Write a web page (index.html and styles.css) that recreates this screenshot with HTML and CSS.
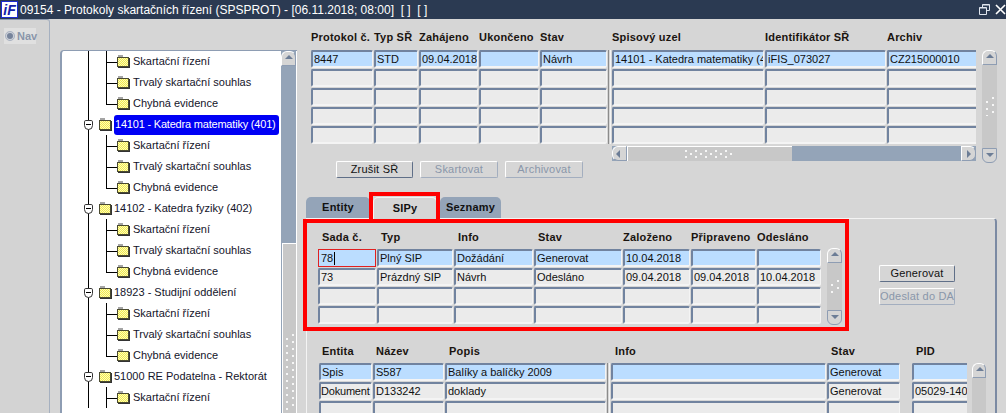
FILE: index.html
```html
<!DOCTYPE html>
<html lang="cs">
<head>
<meta charset="utf-8">
<title>Protokoly skartačních řízení</title>
<link rel="stylesheet" href="styles.css">
</head>
<body>
<div class="app">
  <header class="titlebar">
    <span class="logo">iF</span>
    <span class="title">09154 - Protokoly skartačních řízení (SPSPROT) - [06.11.2018; 08:00]&nbsp; [ ]&nbsp; [ ]</span>
    <span class="winbtns">
      <svg width="11" height="11" viewBox="0 0 11 11"><path d="M3.5 3V.5h7v6H7.5M.5 3.5h7v7h-7z" fill="none" stroke="#dfe5ee"/><path d="M3.5 1h7M.5 4h7" stroke="#dfe5ee"/></svg>
      <svg width="11" height="11" viewBox="0 0 11 11"><path d="M1 1l9 9M10 1l-9 9" stroke="#fff" stroke-width="1.6"/></svg>
    </span>
  </header>
  <div class="workspace">
    <aside class="rail"><div class="nav"><span class="radio"></span><span>Nav</span></div></aside>
    <section class="tree">
      <div class="tree-body">
        <div class="node child first"><span class="folder"></span>Skartační řízení</div>
        <div class="node child"><span class="folder"></span>Trvalý skartační souhlas</div>
        <div class="node child last"><span class="folder"></span>Chybná evidence</div>
        <div class="node parent"><span class="twist"></span><span class="folder"></span><span class="sel">14101 - Katedra matematiky (401)</span></div>
        <div class="node child first"><span class="folder"></span>Skartační řízení</div>
        <div class="node child"><span class="folder"></span>Trvalý skartační souhlas</div>
        <div class="node child last"><span class="folder"></span>Chybná evidence</div>
        <div class="node parent"><span class="twist"></span><span class="folder"></span>14102 - Katedra fyziky (402)</div>
        <div class="node child first"><span class="folder"></span>Skartační řízení</div>
        <div class="node child"><span class="folder"></span>Trvalý skartační souhlas</div>
        <div class="node child last"><span class="folder"></span>Chybná evidence</div>
        <div class="node parent"><span class="twist"></span><span class="folder"></span>18923 - Studijní oddělení</div>
        <div class="node child first"><span class="folder"></span>Skartační řízení</div>
        <div class="node child"><span class="folder"></span>Trvalý skartační souhlas</div>
        <div class="node child last"><span class="folder"></span>Chybná evidence</div>
        <div class="node parent"><span class="twist"></span><span class="folder"></span>51000 RE Podatelna - Rektorát</div>
        <div class="node child first"><span class="folder"></span>Skartační řízení</div>
      </div>
      <div class="vbar tree-bar">
        <span class="cap up"></span>
        <span class="track-dark"></span>
        <span class="thumb tree-thumb"><span class="dots tall"></span></span>
      </div>
    </section>
    <main class="content">
      <div class="top">
        <div class="table t1">
          <b>Protokol č.</b><b>Typ SŘ</b><b>Zahájeno</b><b>Ukončeno</b><b>Stav</b><i></i><b>Spisový uzel</b><b>Identifikátor SŘ</b><b>Archiv</b>
          <span class="f cur">8447</span><span class="f cur">STD</span><span class="f cur">09.04.2018</span><span class="f cur"></span><span class="f cur">Návrh</span><i class="sep s5"></i><span class="f cur">14101 - Katedra matematiky (401)</span><span class="f cur">iFIS_073027</span><span class="f cur end">CZ215000010</span>
          <span class="f"></span><span class="f"></span><span class="f"></span><span class="f"></span><span class="f"></span><span class="f"></span><span class="f"></span><span class="f end"></span>
          <span class="f"></span><span class="f"></span><span class="f"></span><span class="f"></span><span class="f"></span><span class="f"></span><span class="f"></span><span class="f end"></span>
          <span class="f"></span><span class="f"></span><span class="f"></span><span class="f"></span><span class="f"></span><span class="f"></span><span class="f"></span><span class="f end"></span>
          <span class="f"></span><span class="f"></span><span class="f"></span><span class="f"></span><span class="f"></span><span class="f"></span><span class="f"></span><span class="f end"></span>
          <div class="hbar">
            <span class="cap left"></span>
            <span class="hthumb"><span class="dots wide"></span></span>
            <span class="htrack"><span class="cap right"></span></span>
          </div>
        </div>
        <div class="vbar t1-bar"><span class="cap up"></span><span class="thumb"><span class="dots"></span></span><span class="cap down"></span></div>
      </div>
      <div class="actions">
        <button class="btn on">Zrušit SŘ</button>
        <button class="btn off">Skartovat</button>
        <button class="btn off">Archivovat</button>
      </div>
      <nav class="tabs">
        <span class="tab">Entity</span>
        <span class="tab active">SIPy</span>
        <span class="tab">Seznamy</span>
      </nav>
      <div class="canvas">
        <div class="sip">
          <div class="table t2">
            <b>Sada č.</b><b>Typ</b><b>Info</b><b>Stav</b><b>Založeno</b><b>Připraveno</b><b>Odesláno</b>
            <span class="f cur focus">78<span class="caret"></span></span><span class="f cur">Plný SIP</span><span class="f cur">Dožádání</span><span class="f cur">Generovat</span><span class="f cur">10.04.2018</span><span class="f cur"></span><span class="f cur"></span>
            <span class="f">73</span><span class="f">Prázdný SIP</span><span class="f">Návrh</span><span class="f">Odesláno</span><span class="f">09.04.2018</span><span class="f">09.04.2018</span><span class="f">10.04.2018</span>
            <span class="f"></span><span class="f"></span><span class="f"></span><span class="f"></span><span class="f"></span><span class="f"></span><span class="f"></span>
            <span class="f"></span><span class="f"></span><span class="f"></span><span class="f"></span><span class="f"></span><span class="f"></span><span class="f"></span>
          </div>
          <div class="vbar t2-bar"><span class="cap up"></span><span class="thumb"><span class="dots short"></span></span><span class="cap down"></span></div>
          <div class="side">
            <button class="btn on">Generovat</button>
            <button class="btn off">Odeslat do DA</button>
          </div>
        </div>
        <div class="ent">
          <div class="table t3">
            <b>Entita</b><b>Název</b><b>Popis</b><i></i><b>Info</b><b>Stav</b><b>PID</b>
            <span class="f cur">Spis</span><span class="f cur">S587</span><span class="f cur">Balíky a balíčky 2009</span><i class="sep s3"></i><span class="f cur"></span><span class="f cur gapped">Generovat</span><span class="f cur end"></span>
            <span class="f tight">Dokument</span><span class="f">D133242</span><span class="f">doklady</span><span class="f"></span><span class="f gapped">Generovat</span><span class="f end">05029-140911</span>
            <span class="f"></span><span class="f"></span><span class="f"></span><span class="f"></span><span class="f gapped"></span><span class="f end"></span>
          </div>
          <div class="vbar t3-bar"><span class="cap up"></span><span class="thumb"></span></div>
        </div>
      </div>
      <div class="mark mark-tab"></div>
      <div class="mark mark-sip"></div>
    </main>
  </div>
</div>
</body>
</html>
```
FILE: styles.css
```css
* { box-sizing: border-box; }
html, body { margin: 0; height: 100%; overflow: hidden; }
body { background: #d6d6d6; font: 11px/1 "Liberation Sans", Arial, sans-serif; color: #101010; }
.app { width: 1006px; height: 413px; display: flex; flex-direction: column; overflow: hidden; }

.titlebar { flex: none; height: 19px; background: #2b3a52; display: flex; align-items: center; color: #fff; padding-left: 1px; }
.logo { width: 17px; height: 17px; background: #fff; border: 1px solid #1d2bd0; display: flex; align-items: center; justify-content: center; font: italic bold 14px/1 "Liberation Sans", sans-serif; color: #1420a8; }
.title { margin-left: 2px; font-size: 12px; white-space: nowrap; }
.winbtns { margin-left: auto; display: flex; gap: 5px; }

.workspace { flex: 1; min-height: 0; display: flex; }
.rail { flex: none; width: 50px; background: #d3d3d3; border-right: 1px solid #a5b0c0; border-top: 1px solid #8e9bb0; padding: 8px 0 0 4px; border-radius: 0 3px 0 0; }
.nav { width: 32px; height: 16px; background: #e0e0e0; display: flex; align-items: center; gap: 2px; color: #8a96aa; font-weight: bold; }
.radio { flex: none; width: 10px; height: 10px; margin-left: 1px; border-radius: 50%; background: #76839a; border: 2px solid #cfd3da; outline: 1px solid #aab2c0; outline-offset: -1px; }

.tree { flex: none; width: 237px; margin: 31px 0 0 10px; display: flex; background: #fff; border-left: 2px solid #8e9db3; border-top: 1px solid #8e9db3; border-radius: 4px 0 0 0; height: 400px; }
.tree-body { flex: 1; overflow: hidden; white-space: nowrap; }
.node { position: relative; height: 21px; display: flex; align-items: center; color: #14142a; }
.node::before { content: ""; position: absolute; left: 26px; top: 0; bottom: 0; border-left: 1px solid #000; }
.child { padding-left: 55px; }
.child::after { content: ""; position: absolute; left: 44px; top: 0; height: 11px; width: 10px; border-left: 1px solid #000; border-bottom: 1px solid #000; }
.child:not(.last) .folder::before { content: ""; position: absolute; left: -12px; top: 3px; height: 11px; border-left: 1px solid #000; }
.folder { position: relative; flex: none; width: 12px; height: 10px; margin-right: 4px; background: repeating-conic-gradient(#f0ea50 0 25%, #fffcb8 0 50%) 0 0/2px 2px; border: 1px solid #4a4a30; box-shadow: 1px 1px 0 #333; }
.folder::after { content: ""; position: absolute; left: 0; top: -3px; width: 5px; height: 2px; background: #a5a5a5; }
.parent { padding-left: 37px; }
.parent .folder { margin-right: 3px; }
.twist { position: absolute; left: 22px; top: 6px; width: 9px; height: 10px; background: #fff; border: 1px solid #333; border-radius: 2px 2px 5px 5px; z-index: 1; }
.twist::after { content: ""; position: absolute; left: 1px; top: 3px; width: 5px; border-top: 1px solid #000; }
.sel { flex: none; width: 165px; height: 20px; padding-left: 1px; display: flex; align-items: center; background: #0000f5; color: #fff; border-radius: 3px; letter-spacing: -.2px; }

.vbar { flex: none; display: flex; flex-direction: column; }
.tree-bar { width: 16px; background: #94a4b8; border-right: 1px solid #fff; }
.cap { flex: none; position: relative; display: block; background: #d5d5d5; border: 1px solid #8e9db3; }
.up { height: 15px; border-radius: 6px 6px 0 0; border-top-color: #fff; border-left-color: #fff; }
.down { height: 15px; border-radius: 0 0 6px 6px; }
.up::after, .down::after, .left::after, .right::after { content: ""; position: absolute; left: 3px; width: 0; height: 0; border: 4px solid transparent; }
.up::after { top: 3px; border-top: 0; border-bottom: 4px solid #6c7d96; }
.down::after { top: 4px; border-bottom: 0; border-top: 4px solid #6c7d96; }
.track-dark { flex: none; height: 177px; background: #94a4b8; }
.thumb { flex: 1; background: #c8c8c8; display: flex; align-items: center; justify-content: center; position: relative; }
.tree-thumb { border-top: 1px solid #fff; border-left: 1px solid #fff; margin-left: 1px; }
.dots { display: block; width: 8px; height: 19px; background: radial-gradient(circle at 1px 1px, #f6f6f6 1px, transparent 1.2px) 0 4px/12px 7px, radial-gradient(circle at 1px 1px, #f6f6f6 1px, transparent 1.2px) 6px 0/12px 7px; }
.dots.short { height: 14px; }
.dots.tall { position: absolute; left: 3px; top: 90px; height: 76px; }
.dots.wide { width: 50px; height: 8px; background-size: 10px 6px; background-position: 0 0, 5px 3px; }

.content { flex: 1; min-width: 0; position: relative; padding: 9px 0 0 14px; }
.top { display: flex; gap: 6px; }
.table { display: grid; row-gap: 1px; }
.table > b { height: 18px; display: flex; align-items: center; white-space: nowrap; letter-spacing: .2px; color: #1a1410; }
.table > i { display: block; }
.f { display: flex; align-items: center; height: 18px; margin-right: 1px; padding: 1px 0 0 1px; overflow: hidden; white-space: nowrap; background: #ebebeb; border: 2px solid; border-right-width: 1px; border-color: #71839f #f4f4f4 #f4f4f4 #71839f; border-radius: 2px; }
.cur { background: #bbddff; }
.f.end { margin-right: 0; border-right: 0; border-radius: 2px 0 0 2px; }
.f.tight { padding-left: 0; letter-spacing: -.2px; }
.sep { grid-row: span 5; margin: 0 1px 0 0; width: 3px; border-left: 1px solid #8b8b8b; border-right: 1px solid #f4f4f4; }
.sep.s3 { grid-row: span 3; }
.t1 { grid-template-columns: 63px 45px 60px 61px 68px 4px 153px 122px 89px; grid-template-rows: 21px repeat(5, 18px) 16px; }
.hbar { grid-column: 7 / -1; display: flex; height: 15px; margin-top: 1px; background: #94a4b8; }
.left { width: 15px; height: 15px; border-radius: 6px 0 0 6px; border-top-color: #fff; border-left-color: #fff; }
.left::after { left: 3px; top: 3px; border-left: 0; border-right: 4px solid #6c7d96; }
.hthumb { width: 165px; background: #c8c8c8; border-top: 1px solid #fff; border-left: 1px solid #fff; display: flex; align-items: center; justify-content: center; }
.htrack { flex: 1; display: flex; justify-content: flex-end; background: #94a4b8; }
.right { width: 15px; height: 15px; border-radius: 0 6px 6px 0; border-top-color: #fff; border-left-color: #fff; }
.right::after { left: 5px; top: 3px; border-right: 0; border-left: 4px solid #6c7d96; }
.t1-bar { width: 15px; height: 113px; margin-top: 22px; }

.actions { display: flex; gap: 7px; padding-left: 25px; margin-top: -2px; height: 17px; }
.btn { width: 77px; height: 17px; padding: 0; font: 11px/1 "Liberation Sans", Arial, sans-serif; letter-spacing: .2px; background: #d6d6d6; border: 1px solid; border-radius: 2px; white-space: nowrap; }
.btn.on { color: #111; border-color: #fff #5f6f88 #5f6f88 #fff; }
.btn.off { width: 78px; color: #8a96aa; border-color: #fff #a3aebf #a3aebf #fff; }

.tabs { position: relative; z-index: 1; display: flex; gap: 3px; margin: 19px 0 -1px -5px; height: 22px; }
.tab { width: 64px; height: 21px; display: flex; align-items: center; justify-content: center; font-weight: bold; background: #94a4b8; color: #111; border-radius: 5px 5px 0 0; letter-spacing: .2px; }
.tab.active { height: 22px; background: #d6d6d6; border: 1px solid #f4f4f4; border-bottom: 0; }
.tab:last-child { width: 61px; }
.canvas { margin-left: -5px; width: 691px; height: 197px; border: 1px solid #f4f4f4; border-bottom: 0; border-right: 2px solid #7b8aa3; border-radius: 0 4px 0 0; padding: 9px 0 0 11px; }
.sip { display: flex; }
.t2 { grid-template-columns: 59px 77px 80px 89px 68px 66px 65px; grid-template-rows: 20px repeat(4, 18px); }
.t2 > b:nth-child(-n+4) { padding-left: 4px; }
.t2-bar { width: 15px; height: 77px; margin: 20px 0 0 5px; }
.side { margin: 37px 0 0 37px; display: flex; flex-direction: column; gap: 6px; }
.side .btn { width: 76px; }
.focus { border: 1px solid #e02020; border-radius: 0; padding-left: 2px; }
.caret { flex: none; width: 1px; height: 13px; background: #000; margin-left: 1px; }
.ent { display: flex; margin: 17px 0 0 1px; }
.t3 { grid-template-columns: 54px 72px 162px 4px 216px 85px 55px; grid-template-rows: 20px repeat(3, 18px); }
.t3 > b { padding-left: 4px; }
.t3 > b:nth-child(-n+2) { padding-left: 3px; }
.f.gapped { margin-right: 12px; }
.t3-bar { width: 14px; height: 70px; margin: 21px 0 0 5px; }

.mark { position: absolute; border: 4px solid #ff0000; pointer-events: none; z-index: 2; }
.mark-tab { left: 72px; top: 173px; width: 71px; height: 31px; border-bottom: 0; }
.mark-sip { left: 6px; top: 200px; width: 546px; height: 112px; }
```
